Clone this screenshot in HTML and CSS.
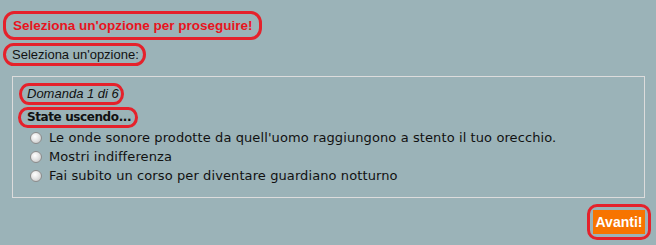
FILE: index.html
```html
<!DOCTYPE html>
<html lang="it">
<head>
<meta charset="utf-8">
<link rel="stylesheet" href="styles.css">
</head>
<body>
<div class="page">
  <div class="alert-row"><span class="mark alert">Seleziona un'opzione per proseguire!</span></div>
  <div class="prompt-row"><span class="mark prompt">Seleziona un'opzione:</span></div>
  <div class="quiz">
    <div class="counter-row"><span class="mark counter">Domanda 1 di 6</span></div>
    <div class="question-row"><span class="mark question">State uscendo...</span></div>
    <ul class="options">
      <li class="option"><span class="radio"></span><span class="label">Le onde sonore prodotte da quell'uomo raggiungono a stento il tuo orecchio.</span></li>
      <li class="option"><span class="radio"></span><span class="label">Mostri indifferenza</span></li>
      <li class="option"><span class="radio"></span><span class="label">Fai subito un corso per diventare guardiano notturno</span></li>
    </ul>
  </div>
  <div class="actions"><span class="mark button-mark"><span class="button">Avanti!</span></span></div>
</div>
</body>
</html>
```
FILE: styles.css
```css
html, body {
  margin: 0;
  padding: 0;
  background: #9bb3b8;
  width: 656px;
  height: 245px;
  overflow: hidden;
}
.page {
  padding: 11px 0 0 3px;
  font-family: "Liberation Sans", Arial, sans-serif;
}
.mark {
  display: inline-block;
  border: 3px solid #e5212b;
  border-radius: 11px / 12px;
}
.alert {
  padding: 3px 6px 3px 7px;
  font-size: 13.5px;
  font-weight: bold;
  line-height: 17px;
  color: #e8141e;
}
.prompt-row {
  margin-top: 3px;
}
.prompt {
  padding: 0 4px 0 6px;
  font-size: 13px;
  line-height: 17px;
  color: #111;
}
.quiz {
  margin: 10px 0 0 9px;
  width: 631px;
  height: 120px;
  border: 1px solid #dcdcdc;
  padding: 0;
}
.counter-row {
  margin: 6px 0 0 6px;
}
.counter {
  padding: 0 2px 0 5px;
  font-size: 13px;
  font-style: italic;
  line-height: 16px;
  color: #111;
}
.question-row {
  margin: 2px 0 0 5px;
}
.question {
  padding: 0 4px 0 6px;
  font-family: "DejaVu Sans", Verdana, sans-serif;
  font-size: 12px;
  font-weight: bold;
  line-height: 15px;
  color: #111;
  letter-spacing: -0.4px;
}
.options {
  list-style: none;
  margin: 0 0 0 17px;
  padding: 0;
}
.option {
  display: flex;
  align-items: center;
  height: 19px;
  font-family: "DejaVu Sans", Verdana, sans-serif;
  font-size: 13px;
  color: #111;
}
.radio {
  box-sizing: border-box;
  width: 12px;
  height: 12px;
  border-radius: 50%;
  border: 1px solid #8c8c8c;
  background: radial-gradient(circle at 40% 35%, #ffffff 0%, #e6e6e6 45%, #bdbdbd 100%);
  margin-right: 7px;
  flex: none;
}
.label {
  line-height: 19px;
  letter-spacing: 0.1px;
}
.actions {
  display: flex;
  justify-content: flex-end;
  margin: 6px 5px 0 0;
}
.button-mark {
  padding: 3px;
  border-radius: 10px;
}
.button {
  display: block;
  width: 52px;
  height: 24px;
  line-height: 24px;
  text-align: center;
  background: #f77400;
  color: #fff;
  font-size: 14px;
  font-weight: bold;
}
```
